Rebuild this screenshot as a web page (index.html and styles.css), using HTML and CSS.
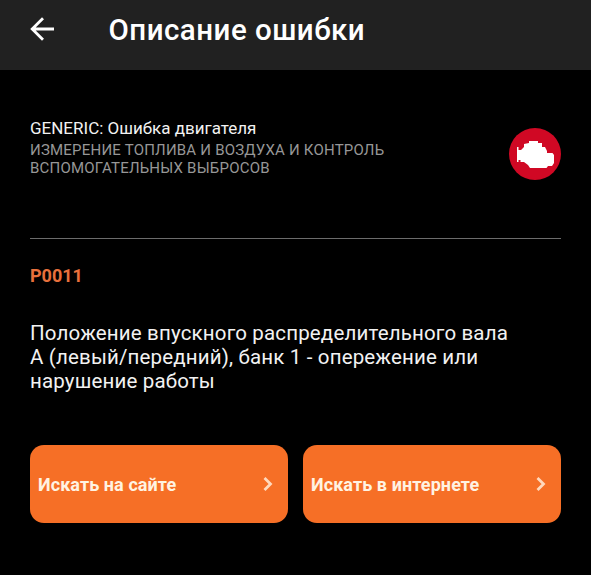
FILE: index.html
```html
<!DOCTYPE html>
<html lang="ru">
<head>
<meta charset="utf-8">
<title>Описание ошибки</title>
<link rel="stylesheet" href="styles.css">
</head>
<body>
<header class="bar">
<svg class="back" viewBox="0 0 24 24"><path d="M24 12H2.5M13 1.2L2.2 12 13 22.8"/></svg>
<h1><span class="t">Описание ошибки</span></h1>
</header>
<main>
<section class="info">
<div>
<p class="name"><span class="t">GENERIC: Ошибка двигателя</span></p>
<p class="sys"><span class="t">ИЗМЕРЕНИЕ ТОПЛИВА И ВОЗДУХА И КОНТРОЛЬ</span><br><span class="t">ВСПОМОГАТЕЛЬНЫХ ВЫБРОСОВ</span></p>
</div>
<svg class="engine" viewBox="0 0 52 52"><circle cx="26" cy="26" r="26" fill="#d00824"/><path fill="#fff" d="M20 13h9v2h4v4h3l2 4v2h5.500l1.500 2v8l-2 3h-4l-1.500 2H21l-2-3-4-3h-3.500v-2H9.500v2H8V19h1.500v3h2.500l3-3v-3l5-1z"/></svg>
</section>
<p class="code"><span class="t">P0011</span></p>
<p class="desc"><span class="t">Положение впускного распределительного вала</span><br><span class="t">А (левый/передний), банк 1 - опережение или</span><br><span class="t">нарушение работы</span></p>
<div class="actions">
<button><span class="t">Искать на сайте</span><svg viewBox="0 0 10 16"><path d="M1.500 2l6 6-6 6"/></svg></button>
<button><span class="t">Искать в интернете</span><svg viewBox="0 0 10 16"><path d="M1.500 2l6 6-6 6"/></svg></button>
</div>
</main>
</body>
</html>
```

FILE: styles.css
```css
* { box-sizing: border-box; }
body { margin: 0; height: 575px; background: #000; color: #f2f2f2; font-family: Roboto, sans-serif; overflow: hidden; white-space: nowrap; }
h1, p { margin: 0; }
.bar { height: 70px; background: #212121; display: flex; align-items: center; padding: 0 30px 12px; gap: 54.5px; }
.back { width: 24px; height: 24px; fill: none; stroke: #fff; stroke-width: 2.8; }
h1 { font-size: 29.5px; font-weight: 500; line-height: 34px; letter-spacing: .48px; padding-top: 2px; color: #fff; }
main { padding: 0 30px; }
.info { height: 169px; border-bottom: 1px solid #6c6c6c; display: flex; justify-content: space-between; padding-top: 48px; }
.name { font-size: 17px; line-height: 20px; }
.sys { font-size: 15px; line-height: 18px; letter-spacing: .21px; color: #979797; margin-top: 3px; }
.engine { width: 52px; height: 52px; margin-top: 10px; }
.code { margin-top: 26px; font-size: 18px; line-height: 22px; font-weight: 700; color: #e8703c; }
.desc { margin-top: 34px; font-size: 20.5px; line-height: 24px; letter-spacing: .16px; }
.actions { display: grid; grid-template-columns: 1fr 1fr; gap: 15px; margin-top: 52px; }
button { height: 78px; border: 0; border-radius: 14px; background: #f66f26; color: #fff3e2; font: 700 18px Roboto, sans-serif; letter-spacing: .08px; display: flex; align-items: center; justify-content: space-between; padding: 0 15px 0 8px; }
button svg { width: 10px; height: 16px; margin-top: -1px; fill: none; stroke: #ffd9bd; stroke-width: 2.8; }
```
